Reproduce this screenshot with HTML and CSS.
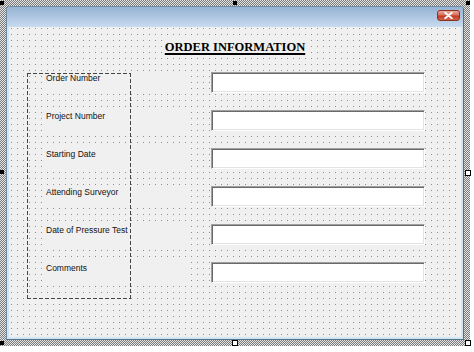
FILE: index.html
```html
<!DOCTYPE html>
<html>
<head>
<meta charset="utf-8">
<title>Order Information</title>
<link rel="stylesheet" href="styles.css">
</head>
<body>
<div class="designer">
  <div class="form">
    <div class="titlebar">
      <button class="close" aria-label="Close"><svg width="9" height="7" viewBox="0 0 9 7"><path d="M1.2 0.8 L7.8 6.2 M7.8 0.8 L1.2 6.2" stroke="#fff" stroke-width="1.9" stroke-linecap="round"/></svg></button>
    </div>
    <div class="client">
      <div class="heading-row"><h1 class="heading">ORDER INFORMATION</h1></div>
      <div class="fields">
        <div class="label">Order Number</div><div class="textbox"></div>
        <div class="label">Project Number</div><div class="textbox"></div>
        <div class="label">Starting Date</div><div class="textbox"></div>
        <div class="label">Attending Surveyor</div><div class="textbox"></div>
        <div class="label">Date of Pressure Test</div><div class="textbox"></div>
        <div class="label">Comments</div><div class="textbox"></div>
      </div>
      <div class="selection-frame"></div>
    </div>
  </div>
  <span class="handle fixed h-tl"></span>
  <span class="handle fixed h-tm"></span>
  <span class="handle fixed h-tr"></span>
  <span class="handle fixed h-ml"></span>
  <span class="handle fixed h-bl"></span>
  <span class="handle grip h-mr"></span>
  <span class="handle grip h-bm"></span>
  <span class="handle grip h-br"></span>
</div>
</body>
</html>
```

FILE: styles.css
```css
html, body {
  margin: 0;
  padding: 0;
  background: #ffffff;
}

.designer {
  position: relative;
  width: 458px;
  height: 334px;
  padding: 6px;
  background: repeating-conic-gradient(#7c7c7c 0 25%, #e4e4e4 0 50%) 0 0 / 2px 2px;
}

.form {
  width: 456px;
  height: 332px;
  border: 1px solid #4f7189;
  border-top-color: #6f8ca3;
  border-left-color: #6f8ca3;
  border-top-left-radius: 4px;
  border-top-right-radius: 4px;
  background: #d3e5f2;
  display: flex;
  flex-direction: column;
}

.titlebar {
  height: 20px;
  flex: none;
  display: flex;
  justify-content: flex-end;
  align-items: flex-start;
  padding-right: 3px;
  background: linear-gradient(#97b3d3 0%, #abc4e0 45%, #c9dbef 100%);
  border-top-left-radius: 3px;
  border-top-right-radius: 3px;
}

.close {
  margin: 3px 0 0 0;
  padding: 0;
  width: 23px;
  height: 11px;
  border: 1px solid #8a3424;
  border-radius: 3px;
  background: linear-gradient(#e9aa9b 0%, #d8705a 45%, #c23a22 55%, #d4624a 100%);
  display: flex;
  align-items: center;
  justify-content: center;
}

.close svg {
  display: block;
}

.client {
  position: relative;
  flex: 1;
  margin: 0 2px 2px 2px;
  background-color: #f0f0f0;
  background-image:
    linear-gradient(90deg, #f0f0f0 5px, transparent 5px),
    linear-gradient(180deg, #f0f0f0 5px, #8e8e8e 5px);
  background-size: 6px 6px;
  background-position: 3px 2px;
}

.heading-row {
  display: flex;
  justify-content: center;
  padding-top: 11px;
}

.heading {
  margin: 0;
  padding: 0 3px;
  background: #f0f0f0;
  font-family: "Liberation Serif", "Times New Roman", serif;
  font-weight: bold;
  font-size: 12.5px;
  line-height: 18px;
  color: #000;
  text-decoration: underline;
  text-decoration-thickness: 1.5px;
  text-underline-offset: 1.5px;
}

.fields {
  display: grid;
  grid-template-columns: 145px 214px;
  grid-auto-rows: 21px;
  column-gap: 24px;
  row-gap: 17px;
  margin: 16px 0 0 33px;
}

.label {
  background: #f0f0f0;
  padding: 1px 0 0 4px;
  font-family: "Liberation Sans", Arial, sans-serif;
  font-size: 8.5px;
  line-height: 11px;
  color: #111;
  white-space: nowrap;
}

.textbox {
  box-sizing: border-box;
  background: #ffffff;
  border: 1px solid;
  border-color: #a0a0a0 #ffffff #ffffff #a0a0a0;
  box-shadow: inset 1px 1px 0 #6a6a6a, inset -1px -1px 0 #e3e3e3;
}

.selection-frame {
  position: absolute;
  left: 18px;
  top: 46px;
  width: 104px;
  height: 226px;
  background:
    repeating-linear-gradient(90deg, #444 0 4px, transparent 4px 6px) left top / 100% 1px no-repeat,
    repeating-linear-gradient(90deg, #444 0 4px, transparent 4px 6px) left bottom / 100% 1px no-repeat,
    repeating-linear-gradient(180deg, #444 0 4px, transparent 4px 6px) left top / 1px 100% no-repeat,
    repeating-linear-gradient(180deg, #444 0 4px, transparent 4px 6px) right top / 1px 100% no-repeat;
}

.handle {
  position: absolute;
  box-sizing: border-box;
}

.handle.fixed {
  width: 4px;
  height: 4px;
  background: #000;
}

.handle.grip {
  width: 6px;
  height: 6px;
  background: #fff;
  border: 1px solid #000;
}

.h-tl { left: 0; top: 1px; }
.h-tm { left: 233px; top: 1px; }
.h-tr { left: 466px; top: 1px; }
.h-ml { left: 0; top: 170px; }
.h-bl { left: 0; top: 341px; }
.h-mr { left: 465px; top: 170px; }
.h-bm { left: 232px; top: 340px; }
.h-br { left: 465px; top: 340px; }
```
